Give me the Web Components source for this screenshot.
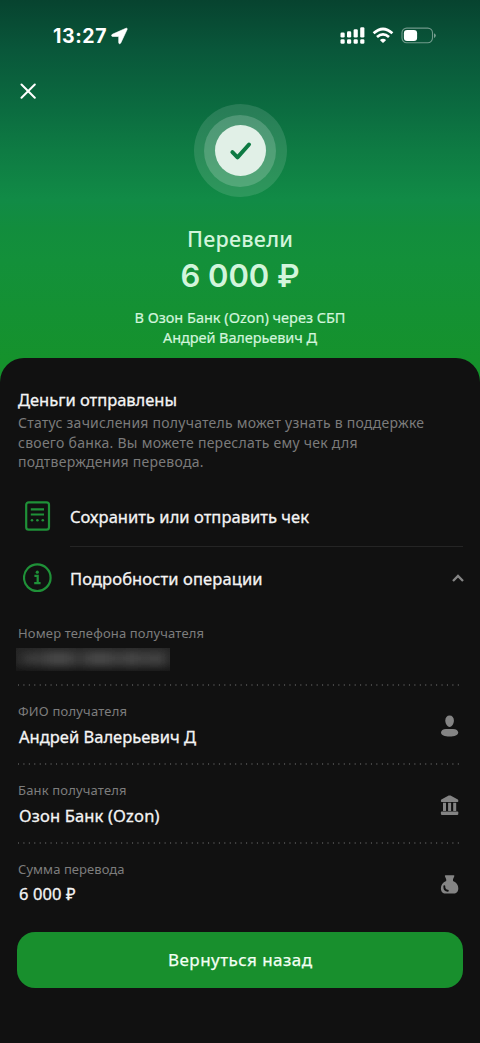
<!DOCTYPE html>
<html lang="ru">
<head>
<meta charset="utf-8">
<title>Перевод</title>
<style>
html,body{margin:0;background:#111}
body{width:480px;height:1043px;overflow:hidden;font-family:"Noto Sans","Open Sans",sans-serif;color:#f4f4f4}
</style>
</head>
<body>
<transfer-screen></transfer-screen>
<script>
const define = (name, html, setup) => {
  const t = document.createElement('template');
  t.innerHTML = html;
  customElements.define(name, class extends HTMLElement {
    constructor() {
      super();
      this.attachShadow({mode: 'open'}).appendChild(t.content.cloneNode(true));
    }
    connectedCallback() { if (setup) setup(this, this.shadowRoot); }
  });
};

// One line of text, tracked so that its advance equals the `w` attribute.
define('tracked-text', `<style>
:host{display:block;white-space:pre;width:max-content}
span{display:inline-block;white-space:pre}
</style><span><slot></slot></span>`, (el, root) => {
  const w = parseFloat(el.getAttribute('w'));
  const s = root.querySelector('span');
  const n = el.textContent.length;
  s.style.letterSpacing = '0';
  const gap = (w - s.getBoundingClientRect().width) / (n - 1);
  s.style.letterSpacing = gap.toFixed(3) + 'px';
  s.style.marginRight = (-gap).toFixed(3) + 'px';
});

define('status-bar', `<style>
:host{display:flex;align-items:center;height:26px;padding:23px 44px 0 53px;color:#fff;font:700 19.500px/26px Inter,sans-serif}
svg{display:block;flex:none}
.arrow{margin-left:4px}
.right{margin-left:auto;display:flex;align-items:center}
</style>
<tracked-text w="53.5">13:27</tracked-text>
<svg class="arrow" width="18" height="18" viewBox="0 0 18 18" fill="#fff" stroke="#fff" stroke-width=".6" stroke-linejoin="round"><path d="M14.900 1.300 1.300 7.300C.1 8 .4 9.500 1.700 9.500H7.700V15.500C7.700 17 9.200 17.100 9.800 15.900L16.100 2.500C16.500 1.500 15.900 .900 14.900 1.300Z"/></svg>
<div class="right">
<svg width="96" height="18" viewBox="0 0 96 18">
<g fill="#fff"><rect x=".5" y="5.500" width="4.200" height="5" rx="1.300"/><rect x="7" y="4.300" width="4.200" height="6.200" rx="1.300"/><rect x="13.600" y="2.300" width="4.200" height="8.200" rx="1.300"/><rect x="20.200" y=".3" width="4.200" height="10.200" rx="1.300"/>
<rect x=".5" y="12.300" width="4.200" height="4.500" rx="1.300"/><rect x="7" y="12.300" width="4.200" height="4.500" rx="1.300"/><rect x="13.600" y="12.300" width="4.200" height="4.500" rx="1.300"/><rect x="20.200" y="12.300" width="4.200" height="4.500" rx="1.300"/></g>
<g fill="none" stroke="#fff" stroke-width="2.700"><path d="M33.600 6.300Q43 -2.300 52.400 6.300"/><path d="M37 10.100Q43 4.600 49 10.100"/></g>
<path d="M39.900 13Q43 10.300 46.100 13L43.600 15.600Q43 16.100 42.400 15.600Z" fill="#fff"/>
<rect x="62" y="1.100" width="30.500" height="14.700" rx="4.700" fill="none" stroke="#fff" stroke-opacity=".42" stroke-width="1.100"/>
<path d="M94 6.200Q95.800 7 95.800 8.600T94 11Z" fill="#fff" fill-opacity=".45"/>
<rect x="63.900" y="3" width="13.200" height="10.900" rx="3.200" fill="#fff"/>
</svg></div>`);

define('success-badge', `<style>
:host{display:grid;place-items:center;width:93px;height:93px;border-radius:50%;background:rgba(255,255,255,.12)}
.mid{display:grid;place-items:center;width:72px;height:72px;border-radius:50%;background:rgba(255,255,255,.18)}
.core{display:grid;place-items:center;width:51px;height:51px;border-radius:50%;background:#e1f0e7}
svg{display:block;margin-left:2px}
</style><div class="mid"><div class="core"><svg width="24" height="20" viewBox="0 0 24 20"><path d="M3.400 11.200 8.500 16.300 20 3.500" fill="none" stroke="#0d7a43" stroke-width="4" stroke-linecap="round" stroke-linejoin="round"/></svg></div></div>`);

define('transfer-hero', `<style>
:host{display:block;height:390px;background:linear-gradient(#07432f 0,#09573a 50px,#0b6c40 110px,#0e7b43 150px,#118b46 200px,#128d3d 228px,#13903a 260px,#15922c 360px)}
.close{display:block;margin:34px 0 0 20px}
.stack{display:flex;flex-direction:column;align-items:center;color:#d2f5dc}
success-badge{margin-top:5px}
.title{font:500 21.500px/28px "Noto Sans",sans-serif;margin-top:28px}
.sum{font:600 31px/40px Inter,"Noto Sans",sans-serif;margin-top:3px}
.to{font:400 14.500px/20px "Noto Sans",sans-serif;-webkit-text-stroke:.2px}
</style>
<status-bar></status-bar>
<svg class="close" width="16" height="16" viewBox="0 0 16 16"><path d="M1.500 1.500 14.800 14.800M14.800 1.500 1.500 14.800" stroke="#fff" stroke-width="2" stroke-linecap="round"/></svg>
<div class="stack">
<success-badge></success-badge>
<tracked-text class="title" w="106">Перевели</tracked-text>
<tracked-text class="sum" w="119">6 000 ₽</tracked-text>
<tracked-text class="to" style="margin-top:11px" w="211">В Озон Банк (Ozon) через СБП</tracked-text>
<tracked-text class="to" w="154">Андрей Валерьевич Д</tracked-text>
</div>`);

define('action-row', `<style>
:host{display:flex;align-items:center;height:61px;padding-left:5px}
.icon{width:30px;height:30px;margin-right:17px}
.body{flex:1;display:flex;align-items:center;justify-content:space-between;height:100%;font:400 16.500px/20px "Noto Sans",sans-serif;-webkit-text-stroke:.3px;padding-top:2px;box-sizing:border-box;border-bottom:1px solid var(--line,transparent)}
</style><div class="icon"><slot name="icon"></slot></div><div class="body"><slot></slot><slot name="end"></slot></div>`);

define('dotted-rule', `<style>:host{display:block;height:2px}svg{display:block}</style>
<svg width="446" height="2"><path d="M.500 1H444" stroke="#626262" stroke-width="1.300" stroke-dasharray="0 5.430" stroke-linecap="round"/></svg>`);

define('detail-row', `<style>
:host{display:block;height:78.700px;box-sizing:border-box}
.main{display:flex;height:76.700px;justify-content:space-between}
.col{padding-top:16px}
.label{font:400 13px/18px "Noto Sans",sans-serif;color:#7d7d7d}
.value{font:400 16.500px/20px "Noto Sans",sans-serif;-webkit-text-stroke:.3px;padding:6.500px 0 0 1px}
.icon{width:20px;padding:28px 3px 0 0}
:host([last]){height:77.700px}
:host([last]) dotted-rule{display:none}
</style><div class="main"><div class="col"><div class="label"><slot name="label"></slot></div><div class="value"><slot></slot></div></div><div class="icon"><slot name="icon"></slot></div></div><dotted-rule></dotted-rule>`);

// Hidden phone number: a smudged strip.
define('masked-value', `<style>
:host{display:block;width:154px;height:23px;margin:0 0 0 -3px;background:linear-gradient(#242424,#222 65%,#171717);overflow:hidden}
svg{display:block}
</style><svg width="154" height="23"><defs><filter id="b" x="-20%" y="-100%" width="140%" height="300%"><feGaussianBlur stdDeviation="7 5"/></filter></defs>
<g filter="url(#b)" fill="#4c4c4c"><rect x="8" y="6" width="14" height="9"/><rect x="26" y="4" width="34" height="13"/><rect x="67" y="4" width="34" height="13"/><rect x="105" y="4" width="22" height="13"/><rect x="131" y="4" width="18" height="13"/></g></svg>`);

define('primary-button', `<style>
:host{display:block}
button{display:flex;align-items:center;justify-content:center;width:100%;height:56px;border:0;border-radius:18px;background:#188f2d;color:#f3fff4;font:400 17px/20px "Noto Sans",sans-serif;-webkit-text-stroke:.25px;padding:0}
</style><button><slot></slot></button>`);

define('details-sheet', `<style>
:host{display:block;position:relative;margin-top:-32px;height:685px;box-sizing:border-box;padding:32px 17px 0 18px;border-radius:24px 24px 0 0;background:#111}
h1{margin:0 0 3px;font:400 16.500px/20px "Noto Sans",sans-serif;-webkit-text-stroke:.3px}
.note{font:400 14px/19.600px "Noto Sans",sans-serif;color:#7b7b7b}
.first{margin-top:14px;--line:#252525}
.second{margin-top:2px;height:59px}
.chevron{margin-right:-1px}
svg{display:block}
primary-button{margin:10px 0 0 -1px}
</style>
<h1><tracked-text w="159">Деньги отправлены</tracked-text></h1>
<div class="note">
<tracked-text w="406">Статус зачисления получатель может узнать в поддержке</tracked-text>
<tracked-text w="339.5">своего банка. Вы можете переслать ему чек для</tracked-text>
<tracked-text w="185.5">подтверждения перевода.</tracked-text>
</div>
<action-row class="first">
<svg slot="icon" width="30" height="30" viewBox="0 0 30 30"><g fill="none" stroke="#1f9138" stroke-width="2.200"><rect x="3.200" y="1.300" width="22.800" height="27.400" rx="2.500"/><path d="M7.800 8.300H21M7.800 13.500H21"/></g><g fill="#1f9138"><circle cx="9" cy="19.300" r="1.300"/><circle cx="14.400" cy="19.300" r="1.300"/><circle cx="19.800" cy="19.300" r="1.300"/></g></svg>
<tracked-text w="239">Сохранить или отправить чек</tracked-text>
</action-row>
<action-row class="second">
<svg slot="icon" width="30" height="30" viewBox="0 0 30 30" fill="none" stroke="#1f9138" stroke-width="2.200"><circle cx="14.300" cy="14.700" r="13.300"/><path d="M11.400 12.900H14.700V20M11.200 20.200H17.600"/><circle cx="14.300" cy="9.200" r="1.600" fill="#1f9138" stroke="none"/></svg>
<tracked-text w="192.5">Подробности операции</tracked-text>
<svg class="chevron" slot="end" width="12" height="9" viewBox="0 0 12 9"><path d="M1 7 6 2 11 7" fill="none" stroke="#858585" stroke-width="2.300"/></svg>
</action-row>
<detail-row><tracked-text slot="label" w="186">Номер телефона получателя</tracked-text><masked-value></masked-value></detail-row>
<detail-row><tracked-text slot="label" w="109">ФИО получателя</tracked-text><tracked-text w="177">Андрей Валерьевич Д</tracked-text>
<svg slot="icon" width="20" height="24" viewBox="0 0 20 24" fill="#848484"><path d="M9.600 1.600C12.300 1.600 13.900 3.700 13.900 6.600S12.200 12.900 9.600 12.900 5.300 9.500 5.300 6.600 6.900 1.600 9.600 1.600Z"/><path d="M1 18.500C1 16.600 3 14.900 6 14.900H13.200C16.200 14.900 18.200 16.600 18.200 18.500 18.200 21.300 14.500 22.600 9.600 22.600S1 21.300 1 18.500Z"/></svg></detail-row>
<detail-row><tracked-text slot="label" w="108.5">Банк получателя</tracked-text><tracked-text w="140.5">Озон Банк (Ozon)</tracked-text>
<svg slot="icon" width="20" height="26" viewBox="0 0 20 26" fill="#848484"><path d="M8.700 2.600Q9.600 2.200 10.500 2.600L17.400 6.200Q18.300 6.700 18.300 7.500V8.300Q18.300 9 17.600 9H1.600Q.9 9 .9 8.300V7.500Q.9 6.700 1.800 6.200ZM3 9.700H6V17.900H3ZM8.100 9.700H11.100V17.900H8.100ZM13.200 9.700H16.200V17.900H13.200Z"/><rect x=".900" y="18.600" width="17.400" height="3.300" rx=".8"/></svg></detail-row>
<detail-row last><tracked-text slot="label" w="106.5">Сумма перевода</tracked-text><tracked-text w="56.5">6 000 ₽</tracked-text>
<svg slot="icon" width="20" height="26" viewBox="0 0 20 26" fill="#848484"><path d="M5.700 3.200H13.600Q14.700 3.200 14.300 4.200L13 7.200V9Q18.300 11.300 18.300 16.200C18.300 19.500 16.500 21.600 13.700 21.600H5.500C2.700 21.600.9 19.500.9 16.200Q.9 11.300 6.200 9V7.200L4.900 4.200Q4.600 3.200 5.700 3.200Z"/><path d="M4.300 14.300Q4.200 18.500 7.800 18.700" fill="none" stroke="#111" stroke-width="1.900" stroke-linecap="round"/></svg></detail-row>
<primary-button><tracked-text w="144">Вернуться назад</tracked-text></primary-button>`);

define('transfer-screen', `<style>:host{display:block;width:480px;height:1043px;overflow:hidden}</style><transfer-hero></transfer-hero><details-sheet></details-sheet>`);
</script>
</body>
</html>
